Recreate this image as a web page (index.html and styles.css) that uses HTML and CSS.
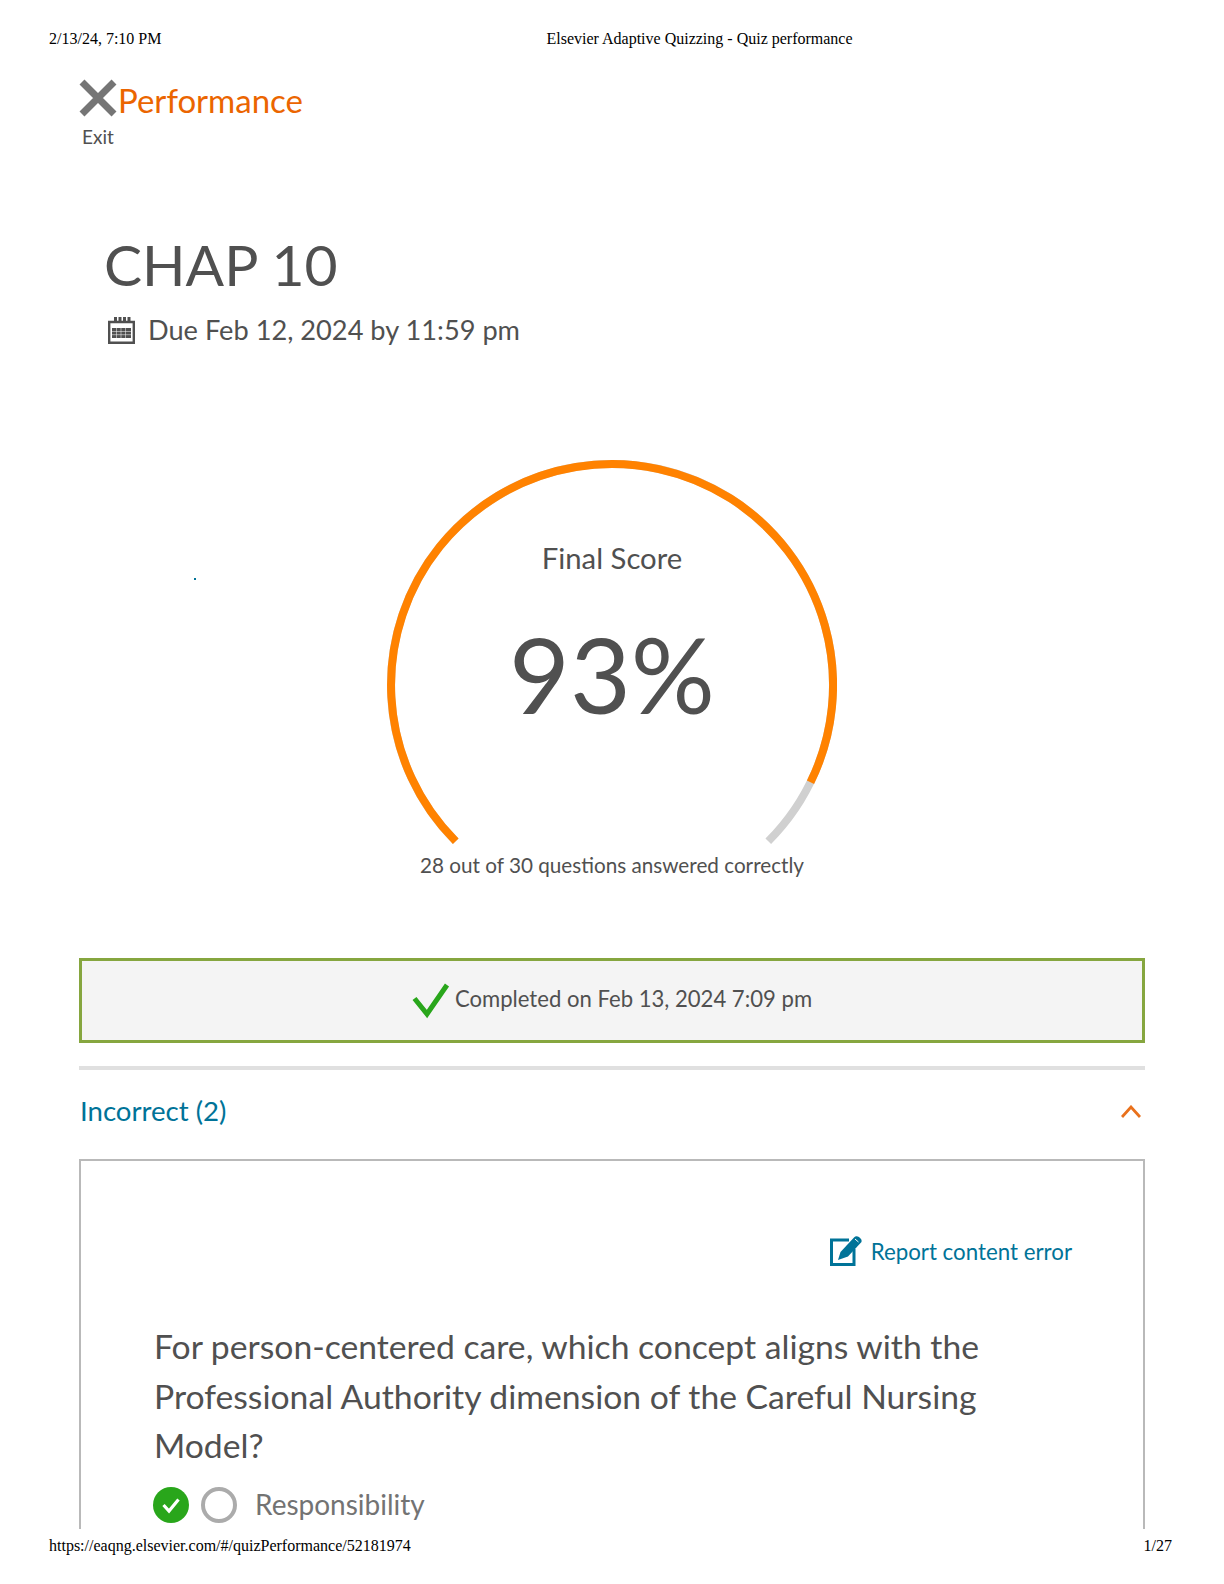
FILE: index.html
```html
<!DOCTYPE html>
<html lang="en">
<head>
<meta charset="utf-8">
<title>Elsevier Adaptive Quizzing - Quiz performance</title>
<link rel="stylesheet" href="styles.css">
</head>
<body>
<header class="print-bar print-head">
  <span>2/13/24, 7:10 PM</span>
  <span class="print-title">Elsevier Adaptive Quizzing - Quiz performance</span>
</header>
<main class="sheet">
  <div class="topbar">
    <div class="exit">
      <svg class="exit-x" viewBox="0 0 38 38" aria-hidden="true"><path d="M3 3 35 35M35 3 3 35" fill="none" stroke="#757575" stroke-width="7"/></svg>
      <span class="exit-label">Exit</span>
    </div>
    <span class="page-name">Performance</span>
  </div>
  <section class="quiz-head">
    <h1>CHAP 10</h1>
    <div class="due">
      <svg class="cal" viewBox="0 0 27 27" aria-hidden="true">
        <path d="M1.200 5h24.600v20.800H1.200z" fill="none" stroke="#505050" stroke-width="2.400"/>
        <path d="M6 0h3v6H6zM10.500 0h3v6h-3zM15 0h3v6h-3zM19.500 0h3v6h-3z" fill="#505050"/>
        <path d="M4 11h19v10H4z" fill="#505050"/>
        <path d="M4 14.500h19M4 17.700h19M8.500 11v10M13 11v10M17.500 11v10" stroke="#fff" stroke-width=".5"/>
      </svg>
      <span>Due Feb 12, 2024 by 11:59 pm</span>
    </div>
  </section>
  <section class="gauge">
    <span class="stray-dot"></span>
    <svg class="gauge-ring" viewBox="0 0 450 392" aria-hidden="true">
      <path d="M68.730 381.270A221 221 0 1 1 381.270 381.270" fill="none" stroke="#d0d0d0" stroke-width="8"/>
      <path d="M68.730 381.270A221 221 0 1 1 423.500 322.300" fill="none" stroke="#ff8200" stroke-width="8"/>
    </svg>
    <div class="gauge-label">Final Score</div>
    <div class="gauge-value">93%</div>
    <div class="gauge-note">28 out of 30 questions answered correctly</div>
  </section>
  <div class="completed">
    <svg class="tick" viewBox="0 0 38 36" aria-hidden="true"><path d="M2.500 15.500 15 31 35 2" fill="none" stroke="#29a61b" stroke-width="5"/></svg>
    <span>Completed on Feb 13, 2024 7:09 pm</span>
  </div>
  <div class="section-head">
    <span>Incorrect (2)</span>
    <svg class="chev" viewBox="0 0 20 13" aria-hidden="true"><path d="M1 12 10 2l9 10" fill="none" stroke="#e9711c" stroke-width="2.800"/></svg>
  </div>
  <article class="card">
    <div class="report">
      <svg class="report-icon" viewBox="0 0 32 32" aria-hidden="true">
        <path d="M24 14v15.500H1.500V5H19" fill="none" stroke="#007398" stroke-width="3"/>
        <path d="M8 25l2.500-8L24 2.500c1.500-1.500 3-1.500 5-.5 2 1.500 3 3 2.500 5L18 21.500z" fill="#007398"/>
        <path d="M25 4l3.500 3" stroke="#fff" stroke-width="1"/>
      </svg>
      <span>Report content error</span>
    </div>
    <p class="question">For person-centered care, which concept aligns with the Professional Authority dimension of the Careful Nursing Model?</p>
    <div class="answer">
      <svg class="mark" viewBox="0 0 36 36" aria-hidden="true"><circle cx="18" cy="18" r="18" fill="#29a61b"/><path d="M10.500 18l5.500 6 9.500-11.500" fill="none" stroke="#fff" stroke-width="3.200"/></svg>
      <svg class="mark" viewBox="0 0 36 36" aria-hidden="true"><circle cx="18" cy="18" r="16" fill="#fff" stroke="#ababab" stroke-width="4"/></svg>
      <span class="answer-text">Responsibility</span>
    </div>
  </article>
</main>
<footer class="print-bar print-foot">
  <span>https://eaqng.elsevier.com/#/quizPerformance/52181974</span>
  <span>1/27</span>
</footer>
</body>
</html>
```
FILE: styles.css
```css
* { box-sizing: border-box; }
html, body { margin: 0; padding: 0; }
body {
  width: 1224px;
  height: 1584px;
  overflow: hidden;
  background: #fff;
  color: #505050;
  font-family: Lato, "Open Sans", sans-serif;
}
.print-bar {
  display: flex;
  font: 16px/16px "Liberation Serif", serif;
  color: #000;
  padding: 0 52px 0 49px;
}
.print-head { height: 46px; padding-top: 31px; }
.print-title { margin-left: 385px; }
.print-foot { justify-content: space-between; height: 55px; padding-top: 9px; }
.sheet {
  height: 1483px;
  overflow: hidden;
  padding: 0 79px;
}
.topbar { display: flex; align-items: flex-start; padding-top: 33px; height: 183px; }
.exit { width: 39px; display: flex; flex-direction: column; }
.exit-x { width: 38px; height: 38px; display: block; }
.exit-label { font-size: 19px; line-height: 24px; margin: 8px 0 0 3px; }
.page-name { font-size: 33px; line-height: 40px; color: #eb6500; margin-top: 1px; }
.quiz-head { padding-left: 25px; height: 231px; }
h1 { margin: 0; font-size: 57px; line-height: 70px; font-weight: 400; }
.due { display: flex; align-items: center; gap: 13px; font-size: 27.200px; line-height: 40px; margin-top: 11px; }
.cal { width: 27px; height: 27px; margin-left: 4px; }
.gauge { position: relative; width: 450px; height: 498px; margin: 0 auto; }
.gauge-ring { display: block; width: 450px; height: 392px; }
.stray-dot { position: absolute; left: -193px; top: 118px; width: 2px; height: 2px; background: #007398; }
.gauge-label, .gauge-value, .gauge-note {
  position: absolute;
  left: -50px;
  right: -50px;
  text-align: center;
}
.gauge-label { top: 76px; font-size: 29.300px; line-height: 44px; }
.gauge-value { top: 141px; font-size: 105px; line-height: 144px; font-weight: 400; }
.gauge-note { top: 389px; font-size: 20.700px; line-height: 32px; }
.completed {
  display: flex;
  align-items: center;
  justify-content: center;
  gap: 5px;
  height: 85px;
  padding-bottom: 5px;
  border: 3px solid #86a63f;
  background: #f4f4f4;
  font-size: 22.100px;
}
.tick { width: 38px; height: 36px; margin-top: 6px; }
.section-head {
  display: flex;
  align-items: center;
  justify-content: space-between;
  height: 93px;
  margin-top: 23px;
  border-top: 4px solid #e0e0e0;
  padding: 0 4px 7px 1px;
  color: #007398;
  font-size: 27.600px;
}
.section-head span { margin-bottom: 2px; }
.chev { width: 20px; height: 13px; }
.card { border: 2px solid #b9b9b9; height: 800px; padding: 74px 0 0 73px; }
.report {
  display: flex;
  align-items: center;
  justify-content: flex-end;
  gap: 9px;
  padding-right: 71px;
  color: #007398;
  font-size: 22.300px;
}
.report-icon { width: 32px; height: 32px; }
.question { margin: 55px 0 0; width: 860px; font-size: 33.700px; line-height: 49.500px; }
.answer { display: flex; align-items: center; gap: 12px; margin: 16px 0 0 -1px; }
.mark { width: 36px; height: 36px; }
.answer-text { font-size: 28px; color: #737373; margin-left: 6px; line-height: 32px; margin-bottom: 2px; }
```
